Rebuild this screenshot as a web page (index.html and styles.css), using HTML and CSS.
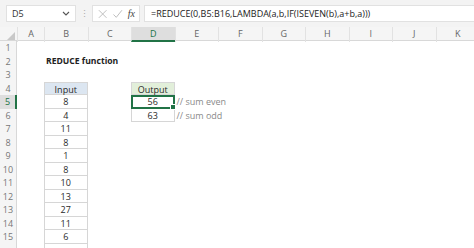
FILE: index.html
```html
<!DOCTYPE html>
<html lang="en">
<head>
  <meta charset="UTF-8">
  <title>REDUCE function</title>
<link rel="stylesheet" href="styles.css">
</head>
<body>
  <div class="toolbar">
    <div class="namebox">
      <span>D5</span>
      <svg class="chev" width="8" height="5" viewBox="0 0 8 5"><path d="M1 1l3 3 3-3" fill="none" stroke="#555" stroke-width="1.1"/></svg>
    </div>
    <div class="grip">⋮</div>
    <div class="fxbox">
      <svg width="12" height="12" viewBox="0 0 12 12"><path d="M2 2l8 8M10 2l-8 8" stroke="#bbb" stroke-width="1"/></svg>
      <svg width="12" height="12" viewBox="0 0 12 12"><path d="M1.5 6.5l3 3 6-7.5" fill="none" stroke="#bbb" stroke-width="1"/></svg>
      <span class="fx">fx</span>
    </div>
    <div class="formula">=REDUCE(0,B5:B16,LAMBDA(a,b,IF(ISEVEN(b),a+b,a)))</div>
  </div>

  <div class="sheet">
    <div class="row head">
      <div class="corner"><svg width="8" height="8" viewBox="0 0 8 8"><path d="M8 0v8H0z" fill="#c8c8c8"/></svg></div>
      <div class="ch">A</div><div class="ch">B</div><div class="ch">C</div>
      <div class="ch active">D</div><div class="ch">E</div><div class="ch">F</div>
      <div class="ch">G</div><div class="ch">H</div><div class="ch">I</div>
      <div class="ch">J</div><div class="ch">K</div>
    </div>

    <div class="row"><div class="rh">1</div></div>
    <div class="row"><div class="rh">2</div><div class="title">REDUCE function</div></div>
    <div class="row"><div class="rh">3</div></div>
    <div class="row">
      <div class="rh">4</div>
      <div class="cell col-b in-head">Input</div>
      <div class="cell col-d out-head">Output</div>
    </div>
    <div class="row">
      <div class="rh active">5</div>
      <div class="cell col-b">8</div>
      <div class="cell col-d selected">56</div>
      <div class="note">// sum even</div>
    </div>
    <div class="row">
      <div class="rh">6</div>
      <div class="cell col-b">4</div>
      <div class="cell col-d">63</div>
      <div class="note">// sum odd</div>
    </div>
    <div class="row"><div class="rh">7</div><div class="cell col-b">11</div></div>
    <div class="row"><div class="rh">8</div><div class="cell col-b">8</div></div>
    <div class="row"><div class="rh">9</div><div class="cell col-b">1</div></div>
    <div class="row"><div class="rh">10</div><div class="cell col-b">8</div></div>
    <div class="row"><div class="rh">11</div><div class="cell col-b">10</div></div>
    <div class="row"><div class="rh">12</div><div class="cell col-b">13</div></div>
    <div class="row"><div class="rh">13</div><div class="cell col-b">27</div></div>
    <div class="row"><div class="rh">14</div><div class="cell col-b">11</div></div>
    <div class="row"><div class="rh">15</div><div class="cell col-b">6</div></div>
    <div class="row"><div class="rh"></div><div class="cell col-b"></div></div>
  </div>
</body>
</html>
```
FILE: styles.css
```css
html, body {
  margin: 0;
  padding: 0;
  background: #fff;
  font-family: "Open Sans", "Noto Sans", sans-serif;
  color: #333;
  overflow: hidden;
}

/* formula bar */
.toolbar {
  display: flex;
  align-items: center;
  gap: 4px;
  height: 27px;
  padding: 0 0 0 6px;
  background: #f3f3f3;
  box-sizing: border-box;
}

.namebox {
  display: flex;
  align-items: center;
  justify-content: space-between;
  width: 70px;
  height: 17px;
  padding: 0 5px 0 5px;
  box-sizing: border-box;
  background: #fff;
  border: 1px solid #e1e1e1;
  font-size: 9px;
  color: #333;
}

.grip {
  width: 8px;
  text-align: center;
  font-size: 9px;
  color: #aaa;
}

.fxbox {
  display: flex;
  align-items: center;
  gap: 4px;
  width: 48px;
  height: 17px;
  padding: 0 4px;
  box-sizing: border-box;
  background: #fff;
  border: 1px solid #e1e1e1;
}

.fx {
  font-family: "Liberation Serif", serif;
  font-style: italic;
  font-size: 10px;
  color: #444;
}

.formula {
  flex: 1;
  height: 17px;
  padding: 0 6px;
  box-sizing: border-box;
  background: #fff;
  border: 1px solid #e1e1e1;
  border-right: none;
  font-size: 9px;
  line-height: 15px;
  color: #222;
  white-space: nowrap;
}

/* sheet */
.row {
  display: grid;
  grid-template-columns: 17px 27px repeat(10, 43.5px);
  height: 13.5px;
  font-size: 9px;
  line-height: 13px;
}

.row.head {
  height: 14px;
  background: #f5f5f5;
  border-bottom: 1px solid #d8d8d8;
  box-sizing: border-box;
}

.corner {
  display: flex;
  align-items: flex-end;
  justify-content: flex-end;
  padding: 0 2px 2px 0;
}

.ch {
  text-align: center;
  color: #666;
  border-left: 1px solid #e2e2e2;
}

.ch.active {
  background: #dedede;
  border-bottom: 2px solid #217346;
  color: #217346;
}

.rh {
  grid-column: 1;
  text-align: center;
  color: #777;
  background: #f5f5f5;
  border-right: 1px solid #d8d8d8;
}

.rh.active {
  background: #dedede;
  border-right: 2px solid #217346;
  color: #217346;
}

.title {
  grid-column: 3 / span 3;
  font-weight: bold;
  font-size: 8.6px;
  color: #222;
  padding-left: 2px;
}

.cell {
  text-align: center;
  color: #2a2a2a;
  border: 1px solid #d6d6d6;
  border-top: none;
  box-sizing: border-box;
  height: 13.5px;
}

.col-b { grid-column: 3; }
.col-d { grid-column: 5; }

.in-head {
  background: #dce6f1;
  border-top: 1px solid #d6d6d6;
}

.out-head {
  background: #e2efda;
  border-top: 1px solid #d6d6d6;
}

.cell.selected {
  position: relative;
  border: 2px solid #217346;
  line-height: 10px;
}

.cell.selected::after {
  content: "";
  position: absolute;
  right: -3px;
  bottom: -3px;
  width: 4px;
  height: 4px;
  background: #217346;
  border: 1px solid #fff;
}

.note {
  grid-column: 6 / span 3;
  color: #8a8a8a;
  padding-left: 2px;
}
```
